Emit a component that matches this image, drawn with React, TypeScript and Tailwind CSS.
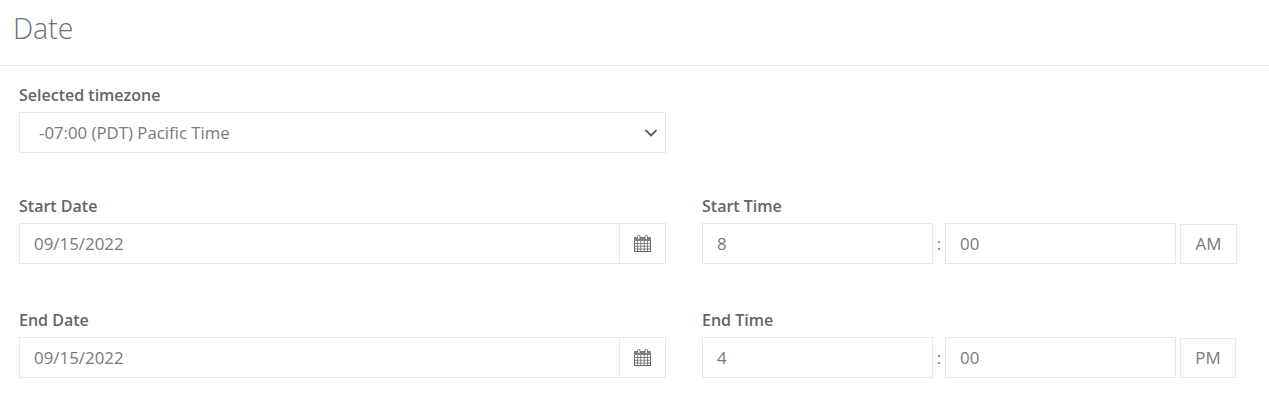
import { ChevronDown } from 'lucide-react';

function CalendarIcon() {
  return (
    <svg width="17" height="17" viewBox="0 0 17 17" fill="none" stroke="#66696b" strokeWidth="1">
      <rect x="0.5" y="2.5" width="16" height="14" fill="#fff" />
      <rect x="0" y="2" width="17" height="4" fill="#808284" stroke="none" />
      <path d="M3.5 6v10M6.75 6v10M10.25 6v10M13.5 6v10M1 8.5h15M1 11.25h15M1 14h15" strokeWidth="0.8" />
      <rect x="3.5" y="0.5" width="2.5" height="4" rx="1" fill="#fff" />
      <rect x="11" y="0.5" width="2.5" height="4" rx="1" fill="#fff" />
    </svg>
  );
}

function Label({ children }: { children: string }) {
  return <label className="block text-[16px] leading-[20px] font-[650] text-[#636567] mb-[7px]">{children}</label>;
}

function DateField({ label, value }: { label: string; value: string }) {
  return (
    <div className="w-[647px]">
      <Label>{label}</Label>
      <div className="flex h-[41px] border border-[#e8e8e8]">
        <div className="flex-1 flex items-center pl-[14px] text-[16.9px] text-[#7a7a7a]">{value}</div>
        <div className="w-[46px] border-l border-[#e8e8e8] flex items-center justify-center">
          <CalendarIcon />
        </div>
      </div>
    </div>
  );
}

function TimeField({ label, hour, meridiem, width }: { label: string; hour: string; meridiem: string; width: string }) {
  return (
    <div>
      <Label>{label}</Label>
      <div className="flex items-end text-[16.9px] text-[#7a7a7a]">
        <div className="w-[231px] h-[41px] border border-[#e8e8e8] flex items-center pl-[14px]">{hour}</div>
        <div className="w-[12px] h-[41px] flex items-center justify-center">:</div>
        <div className="w-[231px] h-[41px] border border-[#e8e8e8] flex items-center pl-[14px]">00</div>
        <div className={`${width} h-[40px] ml-[4px] border border-[#e8e8e8] flex items-center justify-center`}>{meridiem}</div>
      </div>
    </div>
  );
}

export default function App() {
  return (
    <div className="w-[1269px] h-[408px] bg-white overflow-hidden font-['Open_Sans',sans-serif]">
      <div className="h-[66px] border-b border-[#e8e8e8] pl-[13px] pt-[9px]">
        <h2 className="text-[28.5px] leading-[38px] font-light text-[#6d7072]">Date</h2>
      </div>

      <div className="pl-[19px] pt-[19px]">
        <div className="w-[647px]">
          <Label>Selected timezone</Label>
          <div className="flex items-center justify-between h-[41px] border border-[#e8e8e8] pl-[19px] pr-[4px] text-[16.8px] text-[#7a7a7a]">
            <span>-07:00 (PDT) Pacific Time</span>
            <ChevronDown className="w-[20px] h-[20px] text-[#5f6264]" strokeWidth={2.2} />
          </div>
        </div>

        <div className="flex gap-[36px] mt-[43px]">
          <DateField label="Start Date" value="09/15/2022" />
          <TimeField label="Start Time" hour="8" meridiem="AM" width="w-[57px]" />
        </div>

        <div className="flex gap-[36px] mt-[46px]">
          <DateField label="End Date" value="09/15/2022" />
          <TimeField label="End Time" hour="4" meridiem="PM" width="w-[56px]" />
        </div>
      </div>
    </div>
  );
}
